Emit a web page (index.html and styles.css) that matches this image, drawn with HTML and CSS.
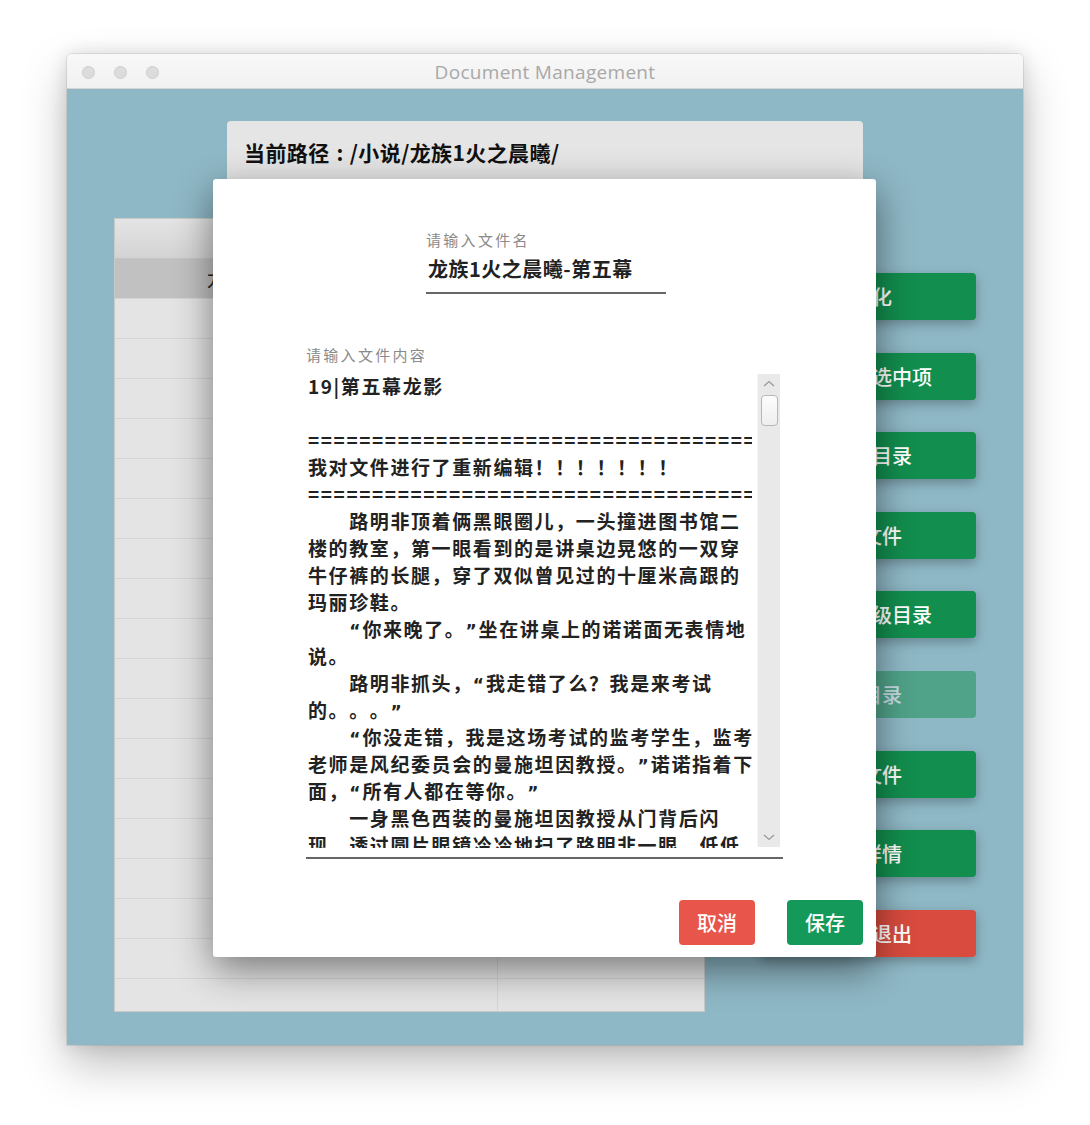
FILE: index.html
```html
<!DOCTYPE html>
<html lang="zh-CN">
<head>
<meta charset="utf-8">
<title>Document Management</title>
<link rel="stylesheet" href="styles.css">
</head>
<body>
<div class="window">
  <div class="titlebar">
    <div class="lights"><span class="light"></span><span class="light"></span><span class="light"></span></div>
    <div class="title">Document Management</div>
    <div></div>
  </div>
  <div class="content">
    <div class="pathbar">当前路径<span class="colon">:</span>/小说/龙族1火之晨曦/</div>
    <div class="main">
      <div class="table">
        <div class="thead"><div class="th"></div><div class="th"></div></div>
        <div class="row selected"><div class="cell">龙族1火之晨曦-第四幕</div><div class="cell">文件</div></div>
        <div class="row"><div class="cell"></div><div class="cell"></div></div>
        <div class="row"><div class="cell"></div><div class="cell"></div></div>
        <div class="row"><div class="cell"></div><div class="cell"></div></div>
        <div class="row"><div class="cell"></div><div class="cell"></div></div>
        <div class="row"><div class="cell"></div><div class="cell"></div></div>
        <div class="row"><div class="cell"></div><div class="cell"></div></div>
        <div class="row"><div class="cell"></div><div class="cell"></div></div>
        <div class="row"><div class="cell"></div><div class="cell"></div></div>
        <div class="row"><div class="cell"></div><div class="cell"></div></div>
        <div class="row"><div class="cell"></div><div class="cell"></div></div>
        <div class="row"><div class="cell"></div><div class="cell"></div></div>
        <div class="row"><div class="cell"></div><div class="cell"></div></div>
        <div class="row"><div class="cell"></div><div class="cell"></div></div>
        <div class="row"><div class="cell"></div><div class="cell"></div></div>
        <div class="row"><div class="cell"></div><div class="cell"></div></div>
        <div class="row"><div class="cell"></div><div class="cell"></div></div>
        <div class="row"><div class="cell"></div><div class="cell"></div></div>
        <div class="row"><div class="cell"></div><div class="cell"></div></div>
      </div>
      <div class="actions">
        <button class="btn">初始化</button>
        <button class="btn">批量删除选中项</button>
        <button class="btn">新建子目录</button>
        <button class="btn">新建文件</button>
        <button class="btn">返回到上级目录</button>
        <button class="btn disabled">打开目录</button>
        <button class="btn">删除文件</button>
        <button class="btn">查看详情</button>
        <button class="btn danger">保存并退出</button>
      </div>
    </div>

    <div class="dialog">
      <div class="name-field">
        <div class="label">请输入文件名</div>
        <div class="name-input">龙族1火之晨曦-第五幕</div>
      </div>
      <div class="content-field">
        <div class="label">请输入文件内容</div>
        <div class="textarea">
          <div class="text">
            <div class="line">19|第五幕龙影</div>
            <div class="line">&nbsp;</div>
            <div class="line">=======================================</div>
            <div class="line">我对文件进行了重新编辑！！！！！！！</div>
            <div class="line">=======================================</div>
            <div class="line">　　路明非顶着俩黑眼圈儿，一头撞进图书馆二</div>
            <div class="line">楼的教室，第一眼看到的是讲桌边晃悠的一双穿</div>
            <div class="line">牛仔裤的长腿，穿了双似曾见过的十厘米高跟的</div>
            <div class="line">玛丽珍鞋。</div>
            <div class="line">　　<span class="q">“</span>你来晚了。<span class="q">”</span>坐在讲桌上的诺诺面无表情地</div>
            <div class="line">说。</div>
            <div class="line">　　路明非抓头，<span class="q">“</span>我走错了么？我是来考试</div>
            <div class="line">的。。。<span class="q">”</span></div>
            <div class="line">　　<span class="q">“</span>你没走错，我是这场考试的监考学生，监考</div>
            <div class="line">老师是风纪委员会的曼施坦因教授。<span class="q">”</span>诺诺指着下</div>
            <div class="line">面，<span class="q">“</span>所有人都在等你。<span class="q">”</span></div>
            <div class="line">　　一身黑色西装的曼施坦因教授从门背后闪</div>
            <div class="line">现，透过圆片眼镜冷冷地扫了路明非一眼，低低</div>
          </div>
          <div class="scrollbar">
            <svg class="arrow" width="12" height="7" viewBox="0 0 12 7"><polyline points="1,6 6,1.5 11,6" fill="none" stroke="#9a9a9a" stroke-width="1.3"/></svg>
            <div class="thumb"></div>
            <svg class="arrow down" width="12" height="7" viewBox="0 0 12 7"><polyline points="1,1 6,5.5 11,1" fill="none" stroke="#9a9a9a" stroke-width="1.3"/></svg>
          </div>
        </div>
      </div>
      <div class="dialog-actions">
        <button class="dbtn cancel">取消</button>
        <button class="dbtn save">保存</button>
      </div>
    </div>
  </div>
</div>
</body>
</html>
```
FILE: styles.css
```css
* { box-sizing: border-box; }
html, body { margin: 0; padding: 0; background: #ffffff; }
body {
  padding: 54px 0 0 67px;
  width: 1090px;
  height: 1125px;
  overflow: hidden;
  font-family: "Noto Sans CJK SC", "Noto Sans", sans-serif;
  text-spacing-trim: space-all;
}
.window {
  width: 956px;
  border-radius: 5px 5px 0 0;
  box-shadow: 0 20px 45px rgba(0,0,0,0.25), 0 0 18px rgba(0,0,0,0.12), 0 0 0 1px rgba(0,0,0,0.08);
}
.titlebar {
  height: 35px;
  display: grid;
  grid-template-columns: 1fr auto 1fr;
  align-items: center;
  background: linear-gradient(#f8f8f8, #f1f1f1);
  border-bottom: 1px solid #d4d4d4;
  border-radius: 5px 5px 0 0;
}
.lights { display: flex; gap: 19px; padding-left: 15px; }
.light {
  width: 13px; height: 13px; border-radius: 50%;
  background: #dcdcdc; border: 1px solid #cecece;
}
.title {
  font-family: "Open Sans", "Liberation Sans", sans-serif;
  font-size: 19px;
  letter-spacing: 0.3px;
  color: #a8a8a8;
  line-height: 36px;
}
.content {
  position: relative;
  height: 956px;
  background: #8fb8c6;
  padding-top: 32px;
}
.pathbar {
  margin-left: 160px;
  width: 636px;
  height: 60px;
  background: #e5e5e5;
  border-radius: 4px 4px 0 0;
  padding: 16px 0 0 17px;
  font-size: 21px;
  line-height: 30px;
  font-weight: 700;
  letter-spacing: 0.4px;
  color: #111;
}
.colon { display: inline-block; padding: 0 6px 0 7px; }
.main { display: flex; margin-top: 37px; padding-left: 47px; }
.table {
  width: 591px;
  height: 794px;
  background: #e4e4e4;
  border: 1px solid #c9c9c9;
  overflow: hidden;
}
.thead {
  height: 40px;
  display: grid;
  grid-template-columns: 382px 1fr;
  background: linear-gradient(#e4e4e4, #d3d3d3);
  border-bottom: 1px solid #c6c6c6;
}
.row {
  height: 40px;
  display: grid;
  grid-template-columns: 382px 1fr;
  border-bottom: 1px solid #d5d5d5;
}
.row .cell + .cell { border-left: 1px solid #d5d5d5; }
.row.selected { background: #c1c1c1; }
.cell {
  font-size: 20px;
  line-height: 39px;
  text-align: center;
  color: #222;
}
.actions {
  margin-left: 55px;
  margin-top: 55px;
  width: 216px;
  display: flex;
  flex-direction: column;
  gap: 32.6px;
}
.btn {
  height: 47px;
  border: 0;
  border-radius: 4px;
  padding: 0 12px 0 0;
  background: #128e4e;
  color: #fff;
  font-family: inherit;
  font-size: 20px;
  font-weight: 500;
  white-space: nowrap;
  box-shadow: 0 4px 12px rgba(0,0,0,0.28);
}
.btn.disabled { opacity: 0.5; box-shadow: none; }
.btn.danger { background: #d84b3e; }

.dialog {
  position: absolute;
  left: 146px;
  top: 90px;
  width: 663px;
  height: 778px;
  background: #fff;
  border-radius: 3px;
  box-shadow: 0 12px 38px rgba(0,0,0,0.48);
  padding: 52px 13px 12px 0;
  display: flex;
  flex-direction: column;
}
.label {
  font-size: 15px;
  line-height: 18px;
  letter-spacing: 2.3px;
  color: #8a8a8a;
}
.name-field { margin-left: 213px; width: 240px; }
.name-input {
  margin-top: 7px;
  font-size: 20px;
  line-height: 26px;
  font-weight: 700;
  letter-spacing: 0.5px;
  color: #222;
  padding: 0 0 10px 2px;
  border-bottom: 2px solid #666;
}
.content-field { margin-top: 52px; margin-left: 93px; width: 477px; }
.textarea {
  margin-top: 8px;
  height: 487px;
  padding-bottom: 9px;
  border-bottom: 2px solid #666;
  display: flex;
}
.text {
  flex: 1;
  overflow: hidden;
  padding: 0 5px 0 2px;
  font-size: 19px;
  line-height: 27px;
  font-weight: 700;
  letter-spacing: 1.6px;
  white-space: nowrap;
  color: #222;
}
.line { height: 27px; overflow: hidden; }
.q {
  font-family: "DejaVu Sans", "Liberation Sans", sans-serif;
  font-weight: 700;
  font-size: 17px;
  line-height: 1;
  letter-spacing: 2px;
}
.scrollbar {
  width: 23px;
  margin: 2px 3px 1px 0;
  background: #e9e9e9;
  border-left: 1px solid #f7f7f7;
  display: flex;
  flex-direction: column;
  align-items: center;
  padding: 6px 0 6px;
}
.thumb {
  margin-top: 8px;
  width: 17px;
  height: 31px;
  border-radius: 4px;
  border: 1px solid #b8b8b8;
  background: linear-gradient(#fdfdfd, #eeeeee);
}
.arrow.down { margin-top: auto; }
.dialog-actions {
  margin-top: auto;
  display: flex;
  justify-content: flex-end;
  gap: 32px;
}
.dbtn {
  width: 76px;
  height: 45px;
  border: 0;
  border-radius: 4px;
  color: #fff;
  font-family: inherit;
  font-size: 20px;
  font-weight: 500;
}
.cancel { background: #e8554a; }
.save { background: #14995a; }
```
